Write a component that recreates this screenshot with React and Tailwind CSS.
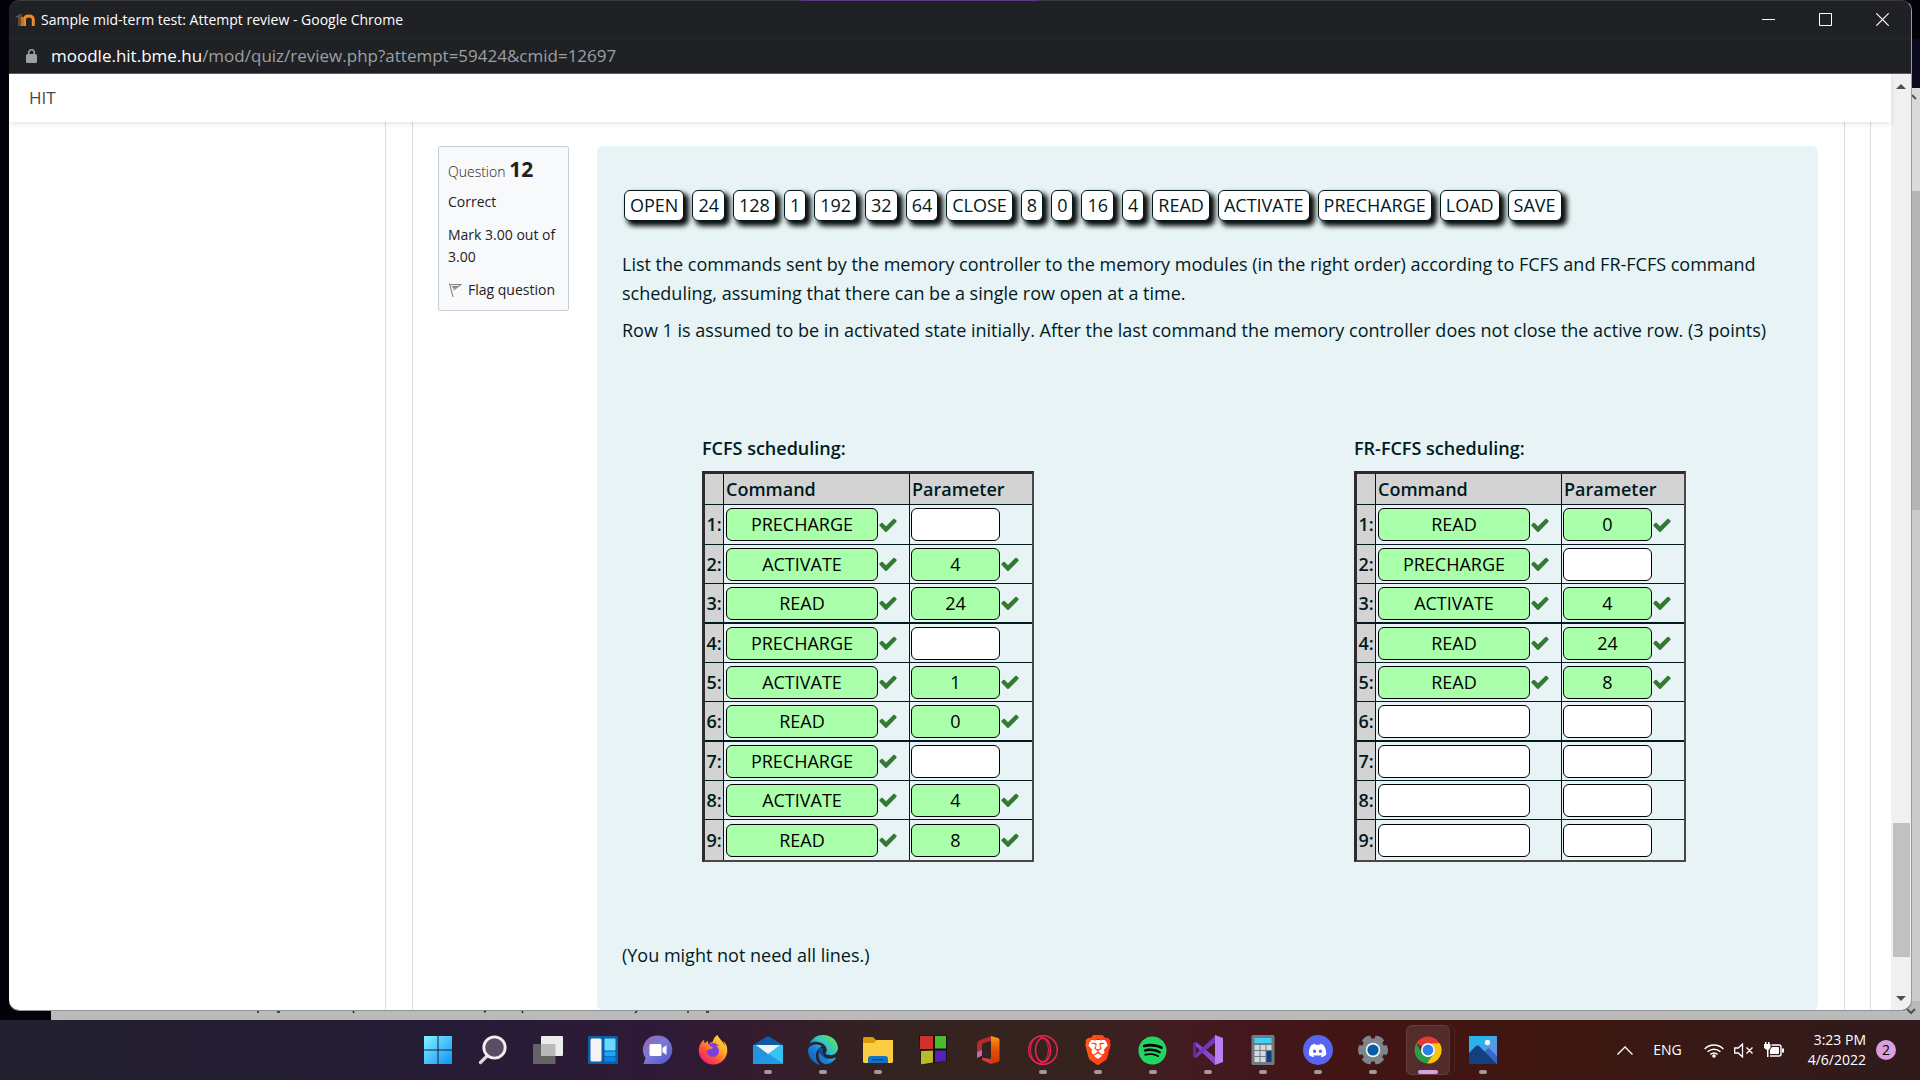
import React from "react";
import { FaSpotify, FaDiscord, FaFirefoxBrowser } from "react-icons/fa";
import { FaEdge } from "react-icons/fa6";
import { SiBrave } from "react-icons/si";

const chips = [
  "OPEN", "24", "128", "1", "192", "32", "64", "CLOSE", "8", "0", "16", "4",
  "READ", "ACTIVATE", "PRECHARGE", "LOAD", "SAVE",
];

const fcfs = [
  ["PRECHARGE", ""], ["ACTIVATE", "4"], ["READ", "24"],
  ["PRECHARGE", ""], ["ACTIVATE", "1"], ["READ", "0"],
  ["PRECHARGE", ""], ["ACTIVATE", "4"], ["READ", "8"],
];

const frfcfs = [
  ["READ", "0"], ["PRECHARGE", ""], ["ACTIVATE", "4"],
  ["READ", "24"], ["READ", "8"], ["", ""],
  ["", ""], ["", ""], ["", ""],
];

function Check() {
  return (
    <svg viewBox="0 0 1792 1792" className="h-5 w-5" role="img" aria-label="Correct">
      <path
        fill="#357a32"
        d="M1671 566q0 40-28 68l-724 724-136 136q-28 28-68 28t-68-28l-136-136-362-362q-28-28-28-68t28-68l136-136q28-28 68-28t68 28l294 295 656-657q28-28 68-28t68 28l136 136q28 28 28 68z"
      />
    </svg>
  );
}

function Drop({ value, wide }) {
  return (
    <div className="flex items-center">
      <span
        className={
          "flex h-[33px] items-center justify-center rounded-md border border-black text-black " +
          (wide ? "w-[152px] " : "w-[89px] ") +
          (value ? "bg-[#aaffaa]" : "bg-white")
        }
      >
        {value}
      </span>
      {value && <Check />}
    </div>
  );
}

function Schedule({ title, rows }) {
  return (
    <section>
      <h4 className="mb-2 font-semibold">{title}</h4>
      <table className="border-separate border-spacing-0 border-t-[3px] border-r-2 border-b-2 border-l-[3px] border-t-[#2f2a2f] border-r-[#4a464a] border-b-[#4a464a] border-l-[#2f2a2f]">
        <thead>
          <tr className="h-[31px] bg-[#d3d3d3] text-left">
            <th className="w-[19px] border-r border-b border-[#001a1e] p-0" />
            <th scope="col" className="w-[186px] border-r border-b border-[#001a1e] p-0 pl-0.5 font-semibold">Command</th>
            <th scope="col" className="w-[122px] border-b border-[#001a1e] p-0 pl-0.5 font-semibold">Parameter</th>
          </tr>
        </thead>
        <tbody>
          {rows.map(([command, parameter], i) => {
            const last = i === rows.length - 1;
            const line = last ? "border-b-0" : i % 3 === 2 ? "border-b-2" : "border-b";
            return (
              <tr key={i} className={i === 0 || i % 3 === 2 ? "h-10" : "h-[39px]"}>
                <th scope="row" className={"border-r border-[#001a1e] bg-[#d3d3d3] p-0 font-semibold " + line}>{i + 1}:</th>
                <td className={"border-r border-[#001a1e] p-0 pl-0.5 " + line}><Drop value={command} wide /></td>
                <td className={"border-[#001a1e] p-0 pl-px " + line}><Drop value={parameter} /></td>
              </tr>
            );
          })}
        </tbody>
      </table>
    </section>
  );
}

function TitleBar() {
  const control = "flex h-[38px] w-[57px] items-center justify-center";
  return (
    <header className="flex h-[38px] items-center border-b border-[#27282b] pl-1.5">
      <svg viewBox="0 0 20 14" className="h-3.5 w-5" aria-hidden="true">
        <path d="M0 4L5 1l3 .5L3 5z" fill="#5a5552" />
        <path d="M3 13V6q0-3 3-3h1v10z" fill="#6b4a32" />
        <path d="M9.500 13V6.500Q9.500 3 13.800 3T18.300 6.500V13" fill="none" stroke="#f08a24" strokeWidth="3" />
        <path d="M6 4h3v9H6z" fill="#c9742a" />
      </svg>
      <h1 className="ml-1.5 flex-1 text-sm text-white">Sample mid-term test: Attempt review - Google Chrome</h1>
      <button type="button" aria-label="Minimize" className={control}>
        <svg viewBox="0 0 13 13" className="h-[13px] w-[13px]"><path d="M0 6.500h13" stroke="#fff" /></svg>
      </button>
      <button type="button" aria-label="Maximize" className={control}>
        <svg viewBox="0 0 13 13" className="h-[13px] w-[13px]"><path d="M.5.5h12v12H.5z" stroke="#fff" fill="none" /></svg>
      </button>
      <button type="button" aria-label="Close" className={control}>
        <svg viewBox="0 0 13 13" className="h-[13px] w-[13px]"><path d="M.3.300l12.400 12.400M12.700.300L.3 12.700" stroke="#fff" strokeWidth="1.200" /></svg>
      </button>
    </header>
  );
}

function AddressBar() {
  return (
    <div className="flex h-[35px] items-center border-b border-[#5a5b5e] pl-[17px] text-[17px]">
      <svg viewBox="0 0 11 14" className="h-3.5 w-[11px]" aria-hidden="true">
        <rect x="0" y="5" width="11" height="9" rx="1.500" fill="#9aa0a6" />
        <path d="M2.700 6V3.600a2.800 2.800 0 0 1 5.600 0V6" fill="none" stroke="#9aa0a6" strokeWidth="1.500" />
      </svg>
      <p className="ml-[14px] leading-6 text-[#9aa0a6]">
        <span className="text-white">moodle.hit.bme.hu</span>/mod/quiz/review.php?attempt=59424&amp;cmid=12697
      </p>
    </div>
  );
}

function ScrollBar() {
  return (
    <div className="flex w-5 shrink-0 flex-col bg-[#f0f0f0]" aria-hidden="true">
      <div className="flex h-6 items-center justify-center">
        <svg viewBox="0 0 10 5" className="h-[5px] w-2.5"><path d="M5 0l5 5H0z" fill="#505050" /></svg>
      </div>
      <div className="grow-[726]" />
      <div className="ml-0.5 w-[17px] grow-[134] bg-[#c1c1c1]" />
      <div className="grow-[29]" />
      <div className="flex h-6 items-center justify-center">
        <svg viewBox="0 0 10 5" className="h-[5px] w-2.5"><path d="M0 0h10L5 5z" fill="#505050" /></svg>
      </div>
    </div>
  );
}

function QuestionInfo() {
  return (
    <aside className="w-[131px] shrink-0 self-start rounded-xs border border-[#c8ced9] bg-[#f8f9fa] px-[9px] pt-2 pb-[9px] text-sm leading-[22px] text-[#1d2125]">
      <h3 className="leading-7 font-light">
        Question <span className="text-[21px] font-bold">12</span>
      </h3>
      <p className="mt-[5px]">Correct</p>
      <p className="mt-[11px] -mr-2">Mark 3.00 out of<br />3.00</p>
      <a href="#flag" className="mt-[11px] flex items-center whitespace-nowrap">
        <svg viewBox="0 0 14 14" className="mr-1.5 h-3.5 w-3.5 shrink-0" aria-hidden="true">
          <path d="M1.500.5L5 14M1 1.500h12L5.500 7M4.500 3.500l4.500-.3L5.500 5z" fill="none" stroke="#8a8a8a" strokeWidth="1.100" />
        </svg>
        Flag question
      </a>
    </aside>
  );
}

function Page() {
  return (
    <div className="flex min-h-0 flex-1 overflow-hidden rounded-b-[10px] bg-white">
      <div className="flex min-w-0 flex-1 flex-col">
        <nav className="z-10 flex h-12 shrink-0 items-center bg-white pl-5 text-[17px] shadow-[0_2px_5px_rgba(0,0,0,0.1)]">
          <a href="#home" className="text-[#44484c]">HIT</a>
        </nav>
        <div className="flex min-h-0 flex-1">
          <div className="w-[377px] shrink-0 border-r border-[#dcdcdc]" />
          <main className="ml-[26px] flex min-w-0 flex-1 gap-7 border-x border-[#dcdcdc] pt-6 pr-[26px] pl-[25px]">
            <QuestionInfo />
            <article className="min-w-0 flex-1 rounded-md bg-[#e7f3f5] px-[25px] pt-11 text-lg leading-[29px] text-[#001a1e]">
              <div className="mb-[29px] ml-0.5 flex flex-wrap gap-2">
                {chips.map((chip) => (
                  <button
                    key={chip}
                    type="button"
                    className="h-[31px] rounded-md border border-[#001a1e] bg-white px-[5px] leading-[29px] shadow-[4px_4px_5px_1px_rgba(0,0,0,0.95)]"
                  >
                    {chip}
                  </button>
                ))}
              </div>
              <p className="mb-2">
                List the commands sent by the memory controller to the memory modules (in the right order) according to FCFS and FR-FCFS command scheduling, assuming that there can be a single row open at a time.
              </p>
              <p className="whitespace-nowrap">
                Row 1 is assumed to be in activated state initially. After the last command the memory controller does not close the active row. (3 points)
              </p>
              <div className="mt-[89px] mb-[79px] flex justify-between pr-[107px] pl-20">
                <Schedule title="FCFS scheduling:" rows={fcfs} />
                <Schedule title="FR-FCFS scheduling:" rows={frfcfs} />
              </div>
              <p>(You might not need all lines.)</p>
            </article>
          </main>
          <div className="w-[26px] shrink-0 border-r border-[#dcdcdc]" />
          <div className="w-5 shrink-0" />
        </div>
      </div>
      <ScrollBar />
    </div>
  );
}

function Backdrop() {
  return (
    <div className="absolute inset-0 -z-10 flex flex-col bg-[#03020a]" aria-hidden="true">
      <div className="flex flex-1 justify-end">
        <div className="flex w-10 flex-col">
          <div className="h-[39px] bg-[#03020a]" />
          <div className="h-[49px] bg-[#0a081c]" />
          <div className="flex h-[103px] justify-end bg-[#dadada] pt-1.5">
            <svg viewBox="0 0 8 8" className="h-2 w-2"><path d="M0 1l4 4" stroke="#555" strokeWidth="2" /></svg>
          </div>
          <div className="h-[319px] bg-[#b5b5b5]" />
          <div className="flex-1 bg-[#cbcbcb]" />
        </div>
      </div>
      <div className="ml-[51px] flex h-[19px] items-end justify-between bg-[#bababa]">
        <svg viewBox="0 0 560 9" className="ml-[200px] h-[9px] w-[560px]">
          <path d="M7 0v2M26 1h3M102 0l1 2M233 1l2-1M271 0l1 2M384 2l2-2M437 0v2M455 1h3" stroke="#222" strokeWidth="1.500" />
        </svg>
        <svg viewBox="0 0 10 10" className="mr-1 mb-1 h-2.5 w-2.5"><path d="M1 3l4 4 4-4" fill="none" stroke="#505050" strokeWidth="2" /></svg>
      </div>
    </div>
  );
}

const art = "h-8 w-8";

const apps = [
  { name: "Start", icon: (
    <svg viewBox="0 0 32 32" className={art}>
      <defs><linearGradient id="win" x1="0" y1="0" x2="32" y2="32" gradientUnits="userSpaceOnUse"><stop offset=".1" stopColor="#7df0ff" /><stop offset=".9" stopColor="#1496f8" /></linearGradient></defs>
      <path d="M2 2h13.500v13.500H2zM16.500 2H30v13.500H16.500zM2 16.500h13.500V30H2zM16.500 16.500H30V30H16.500z" fill="url(#win)" />
    </svg>) },
  { name: "Search", icon: (
    <svg viewBox="0 0 32 32" className={art}>
      <path d="M10 22l-6.500 6.500" stroke="#d8d8d8" strokeWidth="3.200" strokeLinecap="round" />
      <circle cx="17.500" cy="13.500" r="10.700" fill="#5a4e66" stroke="#f0f0f0" strokeWidth="2.800" />
    </svg>) },
  { name: "Task view", icon: (
    <svg viewBox="0 0 32 32" className={art}>
      <rect x="1" y="10" width="22.500" height="20" rx="1" fill="#646464" />
      <rect x="9" y="2" width="22" height="20" rx="1" fill="#ececec" />
      <rect x="9" y="10" width="14.500" height="12" fill="#b9b9b9" />
    </svg>) },
  { name: "Widgets", icon: (
    <svg viewBox="0 0 32 32" className={art}>
      <rect x="1" y="2" width="30" height="28" rx="1.500" fill="#0f5ea8" />
      <rect x="3.500" y="4.500" width="11" height="23" rx="1.500" fill="#f4f4f4" />
      <rect x="17.500" y="4.500" width="11" height="12" rx="1" fill="#6ad7ff" />
      <rect x="17.500" y="17.500" width="11" height="4.500" rx="1" fill="#22a4f5" />
      <rect x="17.500" y="22.500" width="11" height="5" rx="1" fill="#0a84ea" />
    </svg>) },
  { name: "Chat", icon: (
    <svg viewBox="0 0 32 32" className={art}>
      <defs><linearGradient id="chat" x1="0" y1="0" x2="1" y2="1"><stop offset="0" stopColor="#9a62a8" /><stop offset=".45" stopColor="#7c79d8" /><stop offset="1" stopColor="#4c56c8" /></linearGradient></defs>
      <path d="M16 1.500a14.300 14.300 0 1 1 0 28.600H1.500l2-6.100A14.300 14.300 0 0 1 16 1.500z" fill="url(#chat)" />
      <rect x="7.500" y="10" width="12" height="12" rx="1.500" fill="#fff" />
      <path d="M20.500 14l4-3v10l-4-3z" fill="#fff" />
    </svg>) },
  { name: "Firefox", icon: (
    <span className="grid h-8 w-8 place-items-center">
      <svg viewBox="0 0 32 32" className="col-start-1 row-start-1 h-8 w-8">
        <defs><linearGradient id="fox" x1="1" y1="0" x2=".2" y2="1"><stop offset="0" stopColor="#fff04a" /><stop offset=".4" stopColor="#ffab2a" /><stop offset=".7" stopColor="#ff5538" /><stop offset="1" stopColor="#f0147a" /></linearGradient></defs>
        <circle cx="16" cy="16" r="8" fill="#7a3fe0" />
      </svg>
      <FaFirefoxBrowser size={30} fill="url(#fox)" className="col-start-1 row-start-1" />
    </span>) },
  { name: "Mail", running: true, icon: (
    <svg viewBox="0 0 32 32" className={art}>
      <path d="M1 11L16 2l15 9v4H1z" fill="#0f5aa5" />
      <path d="M4 11h24v9H4z" fill="#f2f2f2" />
      <path d="M1 11h3l12 9L31 30H1z" fill="#2196dd" />
      <path d="M31 11h-3l-12 9 15 10z" fill="#35c3f3" />
      <path d="M1 30l15-10 15 10z" fill="#1f9ae4" />
    </svg>) },
  { name: "Edge", running: true, icon: (
    <span className="grid h-8 w-8 place-items-center">
      <svg viewBox="0 0 32 32" className="col-start-1 row-start-1 h-8 w-8">
        <defs><linearGradient id="edge" x1="1" y1="0" x2="0" y2="1"><stop offset=".1" stopColor="#5fe05c" /><stop offset=".42" stopColor="#2cc3d0" /><stop offset=".6" stopColor="#1686d8" /><stop offset="1" stopColor="#0f57a8" /></linearGradient></defs>
        <path d="M12 14q-3 9 4 14 5 2 11-4-6 2-9-1t-2-9z" fill="#0f4b96" />
      </svg>
      <FaEdge size={30} fill="url(#edge)" className="col-start-1 row-start-1" />
    </span>) },
  { name: "File Explorer", running: true, icon: (
    <svg viewBox="0 0 32 32" className={art}>
      <path d="M1 4.500Q1 3 2.500 3H11l3 3v5H1z" fill="#dc9a08" />
      <path d="M1 9h11l2.500-3H31v21.500Q31 29 29.500 29h-27Q1 29 1 27.500z" fill="#fdcc45" />
      <path d="M6 29v-4q0-3 3-3h14q3 0 3 3v4z" fill="#1373c8" />
      <path d="M10 25.700h12" stroke="#0a4d94" strokeWidth="1.500" />
    </svg>) },
  { name: "Classic squares", icon: (
    <svg viewBox="0 0 32 32" className={art}>
      <path d="M2 1.500h28V27L4 31z" fill="#14100f" />
      <path d="M3 2h13v13H3z" fill="#d0312d" />
      <path d="M18 2h11v12.500H18z" fill="#4dbb2f" />
      <path d="M4 17l12-.5v12L4 30.500z" fill="#b9b92c" />
      <path d="M18 16.500h11V27l-11 1.300z" fill="#5a21b8" />
    </svg>) },
  { name: "Office", icon: (
    <svg viewBox="0 0 32 32" className={art}>
      <defs><linearGradient id="office" x1="0" y1="0" x2="0" y2="1"><stop offset="0" stopColor="#ff9a0a" /><stop offset=".55" stopColor="#e34a06" /><stop offset="1" stopColor="#cf3a05" /></linearGradient></defs>
      <path d="M19 2L7 6.500Q5 7.500 5 10v14l5-2.500V11q0-1.500 1.500-2L19 7z" fill="#b52a2d" />
      <path d="M5 24l5-2.500V16l-5 2z" fill="#c06bb0" />
      <path d="M10 23.500l9 1.500v5l-9-4z" fill="#d8383a" />
      <path d="M19 2l7 2q1.500.5 1.500 2v20q0 1.500-1.500 2l-7 2z" fill="url(#office)" />
    </svg>) },
  { name: "Opera GX", running: true, icon: (
    <svg viewBox="0 0 32 32" className={art}>
      <g fill="none" stroke="#e8234f">
        <circle cx="16" cy="16" r="14.300" strokeWidth="1.500" />
        <ellipse cx="12.500" cy="16" rx="9" ry="13.500" strokeWidth="1" />
        <ellipse cx="16" cy="16" rx="7.500" ry="12" strokeWidth="1.500" />
      </g>
    </svg>) },
  { name: "Brave", running: true, icon: (
    <span className="grid h-8 w-8 place-items-center">
      <svg viewBox="0 0 32 32" className="col-start-1 row-start-1 h-8 w-8">
        <defs><linearGradient id="brave" x1="0" y1="0" x2="1" y2="0"><stop offset="0" stopColor="#ff5a1e" /><stop offset="1" stopColor="#ff3412" /></linearGradient></defs>
        <path d="M8 6h16l2 6-3 12-7 4-7-4-3-12z" fill="#fff" />
      </svg>
      <SiBrave size={30} fill="url(#brave)" className="col-start-1 row-start-1" />
    </span>) },
  { name: "Spotify", running: true, icon: (
    <span className="grid h-8 w-8 place-items-center">
      <span className="col-start-1 row-start-1 h-6 w-6 rounded-full bg-black" />
      <FaSpotify size={29} color="#1ed760" className="col-start-1 row-start-1" />
    </span>) },
  { name: "Visual Studio", running: true, icon: (
    <svg viewBox="0 0 32 32" className={art}>
      <path d="M1 9.500L4 8l20 16-1 7z" fill="#8a45cf" />
      <path d="M1 22.500L4 24 24 8V1z" fill="#7236bb" />
      <path d="M1 9.500l3-1.500v16l-3-1.500z" fill="#5b2d9d" />
      <path d="M23 1l8 3v24l-8 3z" fill="#b880f0" />
    </svg>) },
  { name: "Calculator", running: true, icon: (
    <svg viewBox="0 0 32 32" className={art}>
      <rect x="4.500" y="1" width="23" height="30" rx="1.500" fill="#737b82" />
      <rect x="7.500" y="4" width="17" height="5" fill="#3fd2f5" />
      <path d="M7.500 11h5v5h-5zM13.500 11h5v5h-5zM19.500 11h5v5h-5zM7.500 17h5v5h-5zM13.500 17h5v5h-5zM7.500 23h5v5h-5zM13.500 23h5v5h-5z" fill="#d3dade" />
      <path d="M19.500 17h5v11h-5z" fill="#123f80" />
    </svg>) },
  { name: "Discord", running: true, icon: (
    <span className="flex h-[30px] w-[30px] items-center justify-center rounded-full bg-[#5865f2]">
      <FaDiscord size={19} color="#fff" />
    </span>) },
  { name: "Settings", running: true, icon: (
    <svg viewBox="0 0 32 32" className={art}>
      <g fill="#7d848b">
        <circle cx="16" cy="16" r="11.500" />
        {[30, 90, 150, 210, 270, 330].map((a) => (
          <path key={a} d="M12 7L11 2.500q2-1.300 5-1.500t5 1.500L20 7z" transform={`rotate(${a} 16 16)`} />
        ))}
      </g>
      <circle cx="16" cy="16" r="7.300" fill="#f2f2f2" />
      <circle cx="16" cy="16" r="5.600" fill="#0a5ba6" />
    </svg>) },
  { name: "Chrome", running: true, active: true, icon: (
    <svg viewBox="0 0 32 32" className={art}>
      <path d="M16 2.500A13.500 13.500 0 0 1 27.700 9.250H16a6.750 6.750 0 0 0-5.850 3.400L4.300 9.250A13.500 13.500 0 0 1 16 2.500z" fill="#e33b2e" />
      <path d="M4.300 9.250l5.850 10.100a6.750 6.750 0 0 0 5.850 3.400L15 29.500A13.500 13.500 0 0 1 4.300 9.250z" fill="#2c9c48" />
      <path d="M15 29.500l6.850-10.150L10.150 19.350z" fill="#2c9c48" />
      <path d="M27.700 9.250A13.500 13.500 0 0 1 15 29.500l6.850-10.150a6.750 6.750 0 0 0 0-6.750L19 9.250z" fill="#fdc40c" />
      <circle cx="16" cy="16" r="7" fill="#fff" />
      <circle cx="16" cy="16" r="5.400" fill="#2f7de8" />
    </svg>) },
  { name: "Photos", running: true, icon: (
    <svg viewBox="0 0 32 32" className={art}>
      <defs><linearGradient id="photo" x1="0" y1="0" x2="1" y2="1"><stop offset=".3" stopColor="#29b1ea" /><stop offset="1" stopColor="#8a7ee0" /></linearGradient></defs>
      <path d="M2 2h28v28H2z" fill="url(#photo)" />
      <path d="M15 21l5-6q1.500-1.500 3 0l7 7v8H15z" fill="#3a68c8" />
      <path d="M2 19l7-7q1.500-1 3 0l18 18H2z" fill="#143f80" />
      <circle cx="20.500" cy="8.500" r="2.700" fill="#f5f5f5" />
    </svg>) },
];

function AppButton({ app }) {
  return (
    <button type="button" aria-label={app.name} className="relative flex w-[55px] items-center justify-center">
      {app.active && (
        <>
          <span className="absolute top-[5px] left-1.5 h-[50px] w-[49px] rounded-md border border-white/5" />
          <span className="absolute top-[5px] left-1.5 h-[50px] w-11 rounded-md border border-white/5 bg-white/10" />
        </>
      )}
      <span className="relative">{app.icon}</span>
      {app.running && (
        <span
          className={
            "absolute bottom-1.5 h-1 rounded-full " +
            (app.active ? "w-5 bg-[#d99fe0]" : "w-2 bg-[#a39a9c]")
          }
        />
      )}
    </button>
  );
}

function Tray() {
  return (
    <div className="flex items-center justify-end pr-6 text-sm text-white">
      <button type="button" aria-label="Show hidden icons">
        <svg viewBox="0 0 16 9" className="h-[9px] w-4"><path d="M.5 8.500L8 1l7.500 7.500" fill="none" stroke="#fff" strokeWidth="1.300" /></svg>
      </button>
      <button type="button" className="ml-5">ENG</button>
      <button type="button" aria-label="Network, volume and battery" className="ml-[22px] flex items-center gap-2.5">
        <svg viewBox="0 0 20 15" className="h-[15px] w-5">
          <g fill="none" stroke="#fff" strokeWidth="1.500">
            <path d="M.7 6a13 13 0 0 1 18.600 0M3.600 8.800a9 9 0 0 1 12.800 0M6.400 11.500a5 5 0 0 1 7.200 0" />
          </g>
          <circle cx="10" cy="13" r="1.800" fill="#fff" />
        </svg>
        <svg viewBox="0 0 20 15" className="h-[15px] w-5">
          <path d="M.7 5h3.600L8.500 1v13L4.300 10H.7zM12.500 4.500l6 6M18.500 4.500l-6 6" fill="none" stroke="#fff" strokeWidth="1.300" />
        </svg>
        <svg viewBox="0 0 20 16" className="h-4 w-5">
          <path d="M0 2h1V0h1.500v2H4V0h1.500v2h1v4L4.500 8v7H3V8L0 6z" fill="#fff" />
          <path d="M7.500 3H15q2 0 2 2v7q0 2-2 2H6" fill="none" stroke="#fff" strokeWidth="1.400" />
          <path d="M8 5h6q1 0 1 1v5q0 1-1 1H6V8z" fill="#fff" />
          <path d="M18 6.500h2v4h-2z" fill="#fff" />
        </svg>
      </button>
      <button type="button" className="ml-6 text-right leading-5">3:23 PM<br />4/6/2022</button>
      <span className="ml-2.5 flex h-5 w-5 items-center justify-center rounded-full bg-[#d99fe0] text-sm text-black">2</span>
    </div>
  );
}

export default function App() {
  return (
    <div className="flex h-screen flex-col overflow-hidden bg-black font-['Open_Sans',sans-serif]">
      <div className="relative isolate flex min-h-0 flex-1 pr-2 pb-[9px] pl-[9px]">
        <Backdrop />
        <div className="relative flex min-w-0 flex-1 flex-col rounded-[10px] border-t border-t-[#3a3b3e] border-r border-r-[#9a9a9a] border-b border-b-[#8f9494] bg-[#202124]">
          <span className="absolute -top-px left-[792px] h-px w-[237px] bg-[#5b3a86]" />
          <TitleBar />
          <AddressBar />
          <Page />
        </div>
      </div>
      <footer className="grid h-[60px] shrink-0 grid-cols-[1fr_auto_1fr] bg-[linear-gradient(90deg,#22202e_0%,#251c35_22%,#2e1a37_34%,#351c2c_40%,#33231f_47%,#36221e_56%,#431a22_62%,#421514_70%,#3f1610_80%,#351a18_92%,#301a1c_100%)]">
        <div />
        <div className="flex">
          {apps.map((app) => <AppButton key={app.name} app={app} />)}
        </div>
        <Tray />
      </footer>
    </div>
  );
}
